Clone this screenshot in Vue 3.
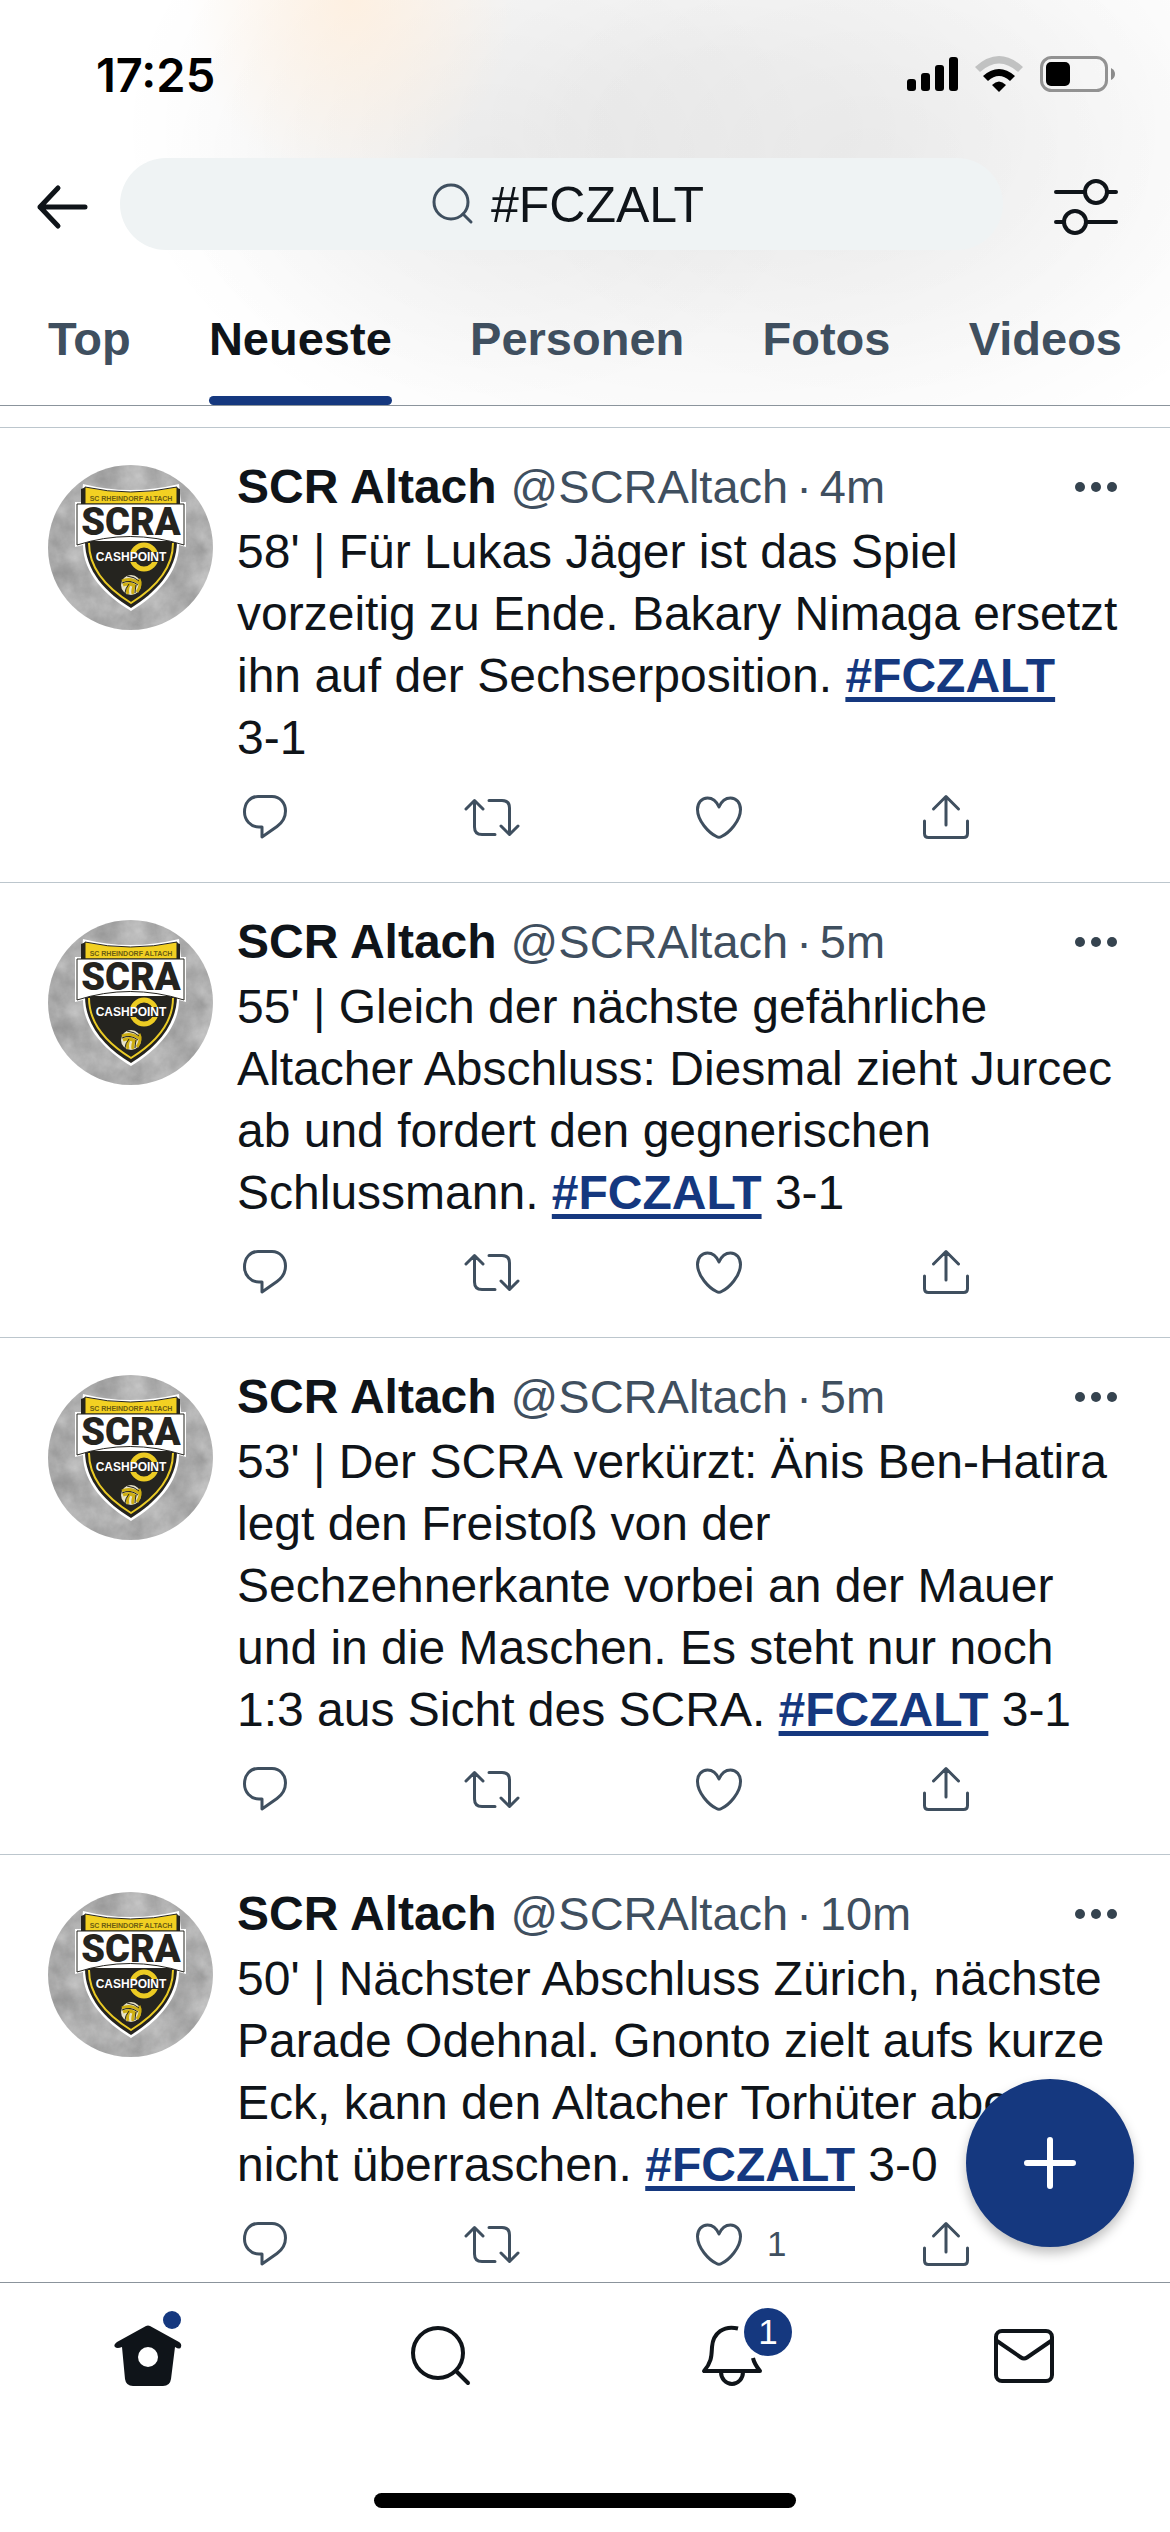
<script setup>
import { ref } from "vue";

const query = ref("#FCZALT");

const tabs = ["Top", "Neueste", "Personen", "Fotos", "Videos"];
const activeTab = ref("Neueste");

const tweets = ref([
  {
    id: 1,
    time: "4m",
    text: "58' | Für Lukas Jäger ist das Spiel vorzeitig zu Ende. Bakary Nimaga ersetzt ihn auf der Sechserposition.",
    score: "3-1",
    likes: 0,
  },
  {
    id: 2,
    time: "5m",
    text: "55' | Gleich der nächste gefährliche Altacher Abschluss: Diesmal zieht Jurcec ab und fordert den gegnerischen Schlussmann.",
    score: "3-1",
    likes: 0,
  },
  {
    id: 3,
    time: "5m",
    text: "53' | Der SCRA verkürzt: Änis Ben-Hatira legt den Freistoß von der Sechzehnerkante vorbei an der Mauer und in die Maschen. Es steht nur noch 1:3 aus Sicht des SCRA.",
    score: "3-1",
    likes: 0,
  },
  {
    id: 4,
    time: "10m",
    text: "50' | Nächster Abschluss Zürich, nächste Parade Odehnal. Gnonto zielt aufs kurze Eck, kann den Altacher Torhüter aber nicht überraschen.",
    score: "3-0",
    likes: 1,
  },
]);

const selectTab = (tab) => {
  activeTab.value = tab;
};

const likeTweet = (tweet) => {
  tweet.likes++;
};
</script>

<template>
  <div class="screen">
    <!-- club badge, shared by all avatars -->
    <svg class="sprite" aria-hidden="true">
      <filter
        id="concrete"
        x="0"
        y="0"
        width="100%"
        height="100%"
        color-interpolation-filters="sRGB"
      >
        <feTurbulence type="fractalNoise" baseFrequency="0.04" numOctaves="5" seed="4" />
        <feColorMatrix
          values="0.25 0 0 0 0.56  0.25 0 0 0 0.56  0.25 0 0 0 0.56  0 0 0 0 1"
        />
      </filter>
      <symbol id="badge" viewBox="0 0 165 165">
        <rect width="165" height="165" filter="url(#concrete)" />
        <path
          d="M35 19Q82 31 131 19L133 37H138V82L131 80C131 108 108 131 83 146C58 131 35 108 35 80L27 82V37H33Z"
          fill="#fff"
        />
        <path d="M33 24L38 22V40H33ZM127 22L132 24V40H127Z" fill="#25241f" />
        <path d="M37 22Q82 32 129 22V39H37Z" fill="#f2d022" stroke="#25241f" />
        <path d="M37 76H129C129 106 107 128 83 143C58 128 37 106 37 76Z" fill="#25241f" />
        <path
          d="M41 78C41 105 62 125 83 138C104 125 125 105 125 78"
          fill="none"
          stroke="#e9ca25"
          stroke-width="2"
        />
        <path d="M29 39H136V80Q82 63 29 80Z" fill="#fff" stroke="#25241f" />
        <text x="83" y="36" class="badge-top">SC RHEINDORF ALTACH</text>
        <text x="83" y="70" class="badge-name">SCRA</text>
        <circle cx="96" cy="92" r="12" fill="none" stroke="#eccb23" stroke-width="5" />
        <path d="M80 92H113" stroke="#25241f" stroke-width="10" />
        <text x="83" y="96" class="badge-sponsor">CASHPOINT</text>
        <circle cx="83" cy="120" r="10" fill="#e8e3c8" />
        <path
          d="M74 116Q82 112 91 118M75 120Q82 117 88 122M83 117Q78 123 80 129M87 119Q84 125 85 129M91 114Q94 120 89 127"
          fill="none"
          stroke="#cdae12"
          stroke-width="3"
        />
        <path
          d="M74 118Q82 114 90 120M81 119Q77 124 77 128M88 120Q87 126 87 128M79 111Q87 112 91 116"
          fill="none"
          stroke="#25241f"
        />
      </symbol>
    </svg>

    <header class="header">
      <div class="status-bar">
        <span class="clock">17:25</span>
        <div class="status-icons">
          <svg width="51" height="36" viewBox="0 0 51 36">
            <rect x="0" y="23" width="9" height="12" rx="3" />
            <rect x="14" y="17" width="9" height="18" rx="3" />
            <rect x="28" y="9" width="9" height="26" rx="3" />
            <rect x="42" y="1" width="9" height="34" rx="3" />
          </svg>
          <svg width="48" height="36" viewBox="0 0 48 36">
            <path d="M0 11Q24 -11 48 11L43 16Q24 -1 5 16Z" fill="#c1c2c2" />
            <path d="M8 20Q24 6 40 20L35 25Q24 15 13 25Z" />
            <path d="M17 29Q24 22 31 29L24 36Z" />
          </svg>
          <svg width="76" height="36" viewBox="0 0 76 36">
            <rect
              x="1.5"
              y="1.5"
              width="65"
              height="33"
              rx="10"
              fill="none"
              stroke="#929292"
              stroke-width="3"
            />
            <rect x="6" y="6" width="24" height="24" rx="5" />
            <path d="M71 12Q75 14 75 18T71 24Z" fill="#8b8b8b" />
          </svg>
        </div>
      </div>

      <div class="search-row">
        <button class="icon-button" aria-label="Zurück">
          <svg width="52" height="48" viewBox="0 0 52 48">
            <path d="M49 24H4M22 5L4 24L22 43" class="line heavy" />
          </svg>
        </button>
        <label class="search-box">
          <svg width="42" height="44" viewBox="0 0 42 44">
            <circle cx="19" cy="20" r="17" class="line thin" />
            <path d="M31 32L39 40" class="line thin" />
          </svg>
          <input v-model="query" class="search-input" type="text" aria-label="Suche" />
        </label>
        <button class="icon-button" aria-label="Filter">
          <svg width="64" height="56" viewBox="0 0 64 56">
            <path d="M2 13H30M54 13H62M2 43H10M34 43H62" class="line" />
            <circle cx="42" cy="13" r="11" class="line" />
            <circle cx="21" cy="43" r="11" class="line" />
          </svg>
        </button>
      </div>

      <nav class="tabs">
        <button
          v-for="tab in tabs"
          :key="tab"
          class="tab"
          :class="{ active: tab === activeTab }"
          @click="selectTab(tab)"
        >
          {{ tab }}
        </button>
      </nav>
    </header>

    <div class="content">
      <main class="feed">
        <article v-for="tweet in tweets" :key="tweet.id" class="tweet">
          <svg class="avatar" role="img" aria-label="SCR Altach"><use href="#badge" /></svg>
          <div class="tweet-body">
            <div class="tweet-head">
              <span class="author">SCR Altach</span>
              <span class="meta">
                <span>@SCRAltach</span>
                <span>·</span>
                <span>{{ tweet.time }}</span>
              </span>
              <button class="more" aria-label="Mehr">
                <svg width="48" height="12" viewBox="0 0 48 12">
                  <circle cx="6" cy="6" r="5" />
                  <circle cx="22" cy="6" r="5" />
                  <circle cx="38" cy="6" r="5" />
                </svg>
              </button>
            </div>
            <p class="tweet-text">
              {{ tweet.text }} <a href="#" class="hashtag">#FCZALT</a> <span class="score">{{ tweet.score }}</span>
            </p>
            <div class="actions">
              <button class="action" aria-label="Antworten">
                <svg width="56" height="56" viewBox="0 0 56 56">
                  <path
                    d="M21 7.5H35C43 7.5 48.5 14 48.5 22C48.5 28.5 45.5 33.5 40 37.5L25 48V38H22C13.5 38 7.5 31 7.5 23C7.5 14 13 7.5 21 7.5Z"
                  />
                </svg>
              </button>
              <button class="action" aria-label="Retweeten">
                <svg width="56" height="56" viewBox="0 0 56 56">
                  <path
                    d="M2 20L10.5 11.5L19 20M10.5 12V38Q10.5 45.5 18 45.5H31M25 11.5H38Q45.5 11.5 45.5 19V45M37 37L45.5 45.5L54 37"
                  />
                </svg>
              </button>
              <button class="action" aria-label="Gefällt mir" @click="likeTweet(tweet)">
                <svg width="56" height="56" viewBox="0 0 56 56">
                  <path
                    d="M28 18C25 11 20 9 16.5 9C10.5 9 6.5 14 6.5 20.5C6.5 32 18 44 25.5 47.5Q28 49 30.5 47.5C38 44 49.5 32 49.5 20.5C49.5 14 45.5 9 39.5 9C36 9 31 11 28 18Z"
                  />
                </svg>
                <span v-if="tweet.likes">{{ tweet.likes }}</span>
              </button>
              <button class="action" aria-label="Teilen">
                <svg width="56" height="56" viewBox="0 0 56 56">
                  <path
                    d="M28 36V8M15.5 20L28 7.5L40.5 20M6.5 32V44.5Q6.5 48.5 10.5 48.5H45.5Q49.5 48.5 49.5 44.5V32"
                  />
                </svg>
              </button>
            </div>
          </div>
        </article>
      </main>

      <button class="compose" aria-label="Neuer Tweet">
        <svg width="52" height="52" viewBox="0 0 52 52">
          <path d="M26 3V49M3 26H49" />
        </svg>
      </button>
    </div>

    <footer class="bottom-bar">
      <nav class="nav">
        <a href="#" class="nav-item" aria-label="Startseite">
          <svg width="72" height="72" viewBox="0 0 72 72">
            <path
              d="M38 6L67 22Q70 24 69 27T63 27L59 59Q58 66 51 66H21Q14 66 13 59L10 27Q5 29 3 27T5 22L34 6Q36 5 38 6Z"
              fill="#0f1419"
            />
            <circle cx="36" cy="37" r="10" fill="#fff" />
            <circle cx="60" cy="0" r="9" class="dot" />
          </svg>
        </a>
        <a href="#" class="nav-item" aria-label="Suchen">
          <svg width="72" height="72" viewBox="0 0 72 72">
            <circle cx="34" cy="33" r="25" class="line" />
            <path d="M52 51L64 63" class="line" />
          </svg>
        </a>
        <a href="#" class="nav-item" aria-label="Mitteilungen">
          <svg width="72" height="72" viewBox="0 0 72 72">
            <path
              d="M42 8.5C28 5 17 13 16 27C15.5 35 16 42 8 51H64C60 46 58 43 57 38"
              class="line butt"
            />
            <path d="M25 52A11 12 0 0 0 47 52" class="line" />
          </svg>
          <span class="count">1</span>
        </a>
        <a href="#" class="nav-item" aria-label="Nachrichten">
          <svg width="72" height="72" viewBox="0 0 72 72">
            <rect x="8" y="11" width="56" height="50" rx="6" class="line" />
            <path d="M9 21L33 37.5Q36 39.5 39 37.5L63 21" class="line" />
          </svg>
        </a>
      </nav>
      <div class="home-indicator"></div>
    </footer>
  </div>
</template>

<style>
body {
  margin: 0;
  background: #fff;
}
</style>

<style scoped>
.screen {
  display: flex;
  flex-direction: column;
  height: 100vh;
  overflow: hidden;
  background: #fff;
  color: #0f1419;
  font-family: "Liberation Sans", Arial, sans-serif;
  font-size: 48px;
}

.sprite {
  position: absolute;
  width: 0;
  height: 0;
}

button {
  padding: 0;
  border: none;
  background: none;
  color: inherit;
  font: inherit;
  cursor: pointer;
}

svg {
  display: block;
  flex: none;
  overflow: visible;
}

.line {
  fill: none;
  stroke: #0f1419;
  stroke-width: 4;
  stroke-linecap: round;
  stroke-linejoin: round;
}

.heavy {
  stroke-width: 5;
}

.thin {
  stroke: #3f4f5f;
  stroke-width: 3;
}

.butt {
  stroke-linecap: butt;
}

/* header */
.header {
  border-bottom: 1px solid #8b949c;
  background:
    radial-gradient(ellipse 14% 46% at 30% 0%, rgba(255, 238, 220, 0.8), transparent),
    radial-gradient(ellipse 28% 60% at 42% 40%, rgba(0, 0, 0, 0.04), transparent),
    radial-gradient(ellipse 30% 60% at 74% 40%, rgba(0, 0, 0, 0.03), transparent),
    radial-gradient(ellipse 52% 92% at 62% 32%, rgba(0, 0, 0, 0.06) 20%, transparent),
    #fff;
}

.status-bar {
  display: flex;
  align-items: center;
  justify-content: space-between;
  height: 148px;
  padding: 0 54px 0 96px;
}

.clock {
  color: #000;
  font-family: Inter, sans-serif;
  font-size: 47px;
  font-weight: 600;
}

.status-icons {
  display: flex;
  gap: 17px;
}

.search-row {
  display: flex;
  align-items: center;
  padding: 10px 52px 0 36px;
}

.icon-button {
  padding-top: 6px;
}

.search-box {
  display: flex;
  flex: 1;
  align-items: center;
  justify-content: center;
  gap: 17px;
  box-sizing: border-box;
  height: 92px;
  margin: 0 51px 0 32px;
  padding-left: 20px;
  border-radius: 46px;
  background: #eff3f4;
}

.search-input {
  width: 220px;
  padding: 2px 0 0;
  border: none;
  outline: none;
  background: none;
  color: #0f1419;
  font: inherit;
  font-size: 50px;
}

.tabs {
  display: flex;
  justify-content: space-between;
  padding: 61px 48px 0;
}

.tab {
  color: #3f4f5f;
  font-size: 47px;
  font-weight: bold;
  line-height: 56px;
}

.tab::after {
  content: "";
  display: block;
  height: 9px;
  margin-top: 29px;
  border-radius: 5px;
}

.tab.active {
  color: #0f1419;
}

.tab.active::after {
  background: #15387f;
}

/* feed */
.content {
  position: relative;
  flex: 1;
  min-height: 0;
}

.feed {
  box-sizing: border-box;
  height: 100%;
  padding-top: 21px;
  overflow-y: auto;
  scrollbar-width: none;
}

.tweet {
  display: flex;
  gap: 24px;
  padding: 31px 48px 37px;
  border-top: 1px solid #bcc6cd;
}

.avatar {
  width: 165px;
  height: 165px;
  margin-top: 6px;
  border-radius: 50%;
  overflow: hidden;
}

.tweet-body {
  flex: 1;
  min-width: 0;
}

.tweet-head {
  display: flex;
  gap: 14px;
  line-height: 56px;
}

.author {
  font-weight: bold;
}

.meta {
  display: flex;
  gap: 8px;
  color: #3f4f5f;
  font-size: 47px;
}

.more {
  display: flex;
  align-items: center;
  margin-left: auto;
  fill: #35434f;
}

.tweet-text {
  margin: 6px 0 20px;
  line-height: 62px;
}

.hashtag {
  color: #15387f;
  font-weight: bold;
  text-decoration: underline;
  text-decoration-thickness: 5px;
  text-decoration-skip-ink: none;
  text-underline-offset: 5px;
}

/* a score must not break at its hyphen */
.score {
  white-space: nowrap;
}

.actions {
  display: flex;
}

.action {
  display: flex;
  flex: none;
  align-items: center;
  gap: 20px;
  width: 227px;
  color: #3f4f5f;
  font-size: 35px;
  line-height: 56px;
}

.action:last-child {
  width: 56px;
}

.action path {
  fill: none;
  stroke: #3f4f5f;
  stroke-width: 3;
  stroke-linecap: round;
  stroke-linejoin: round;
}

.badge-top,
.badge-name,
.badge-sponsor {
  text-anchor: middle;
  font-weight: bold;
}

.badge-top {
  fill: #6b5c12;
  font-size: 7px;
}

.badge-name {
  fill: #25241f;
  font-family: Roboto, sans-serif;
  font-size: 38px;
  font-weight: 900;
}

.badge-sponsor {
  fill: #fff;
  font-size: 12px;
}

.compose {
  position: absolute;
  right: 36px;
  bottom: 35px;
  display: flex;
  align-items: center;
  justify-content: center;
  width: 168px;
  height: 168px;
  border-radius: 50%;
  background: #15387f;
  box-shadow: 0 6px 12px rgba(0, 0, 0, 0.25);
}

.compose path {
  stroke: #fff;
  stroke-width: 6;
  stroke-linecap: round;
}

/* bottom bar */
.bottom-bar {
  padding: 37px 0 24px;
  border-top: 1px solid #8b949c;
  background: #fff;
}

.nav {
  display: grid;
  grid-template-columns: repeat(4, 1fr);
  justify-items: center;
  padding-left: 2px;
}

.nav-item {
  position: relative;
  color: #0f1419;
  text-decoration: none;
}

.dot {
  fill: #15387f;
}

.count {
  position: absolute;
  top: -12px;
  left: 48px;
  width: 48px;
  border-radius: 50%;
  background: #15387f;
  color: #fff;
  font-size: 35px;
  line-height: 48px;
  text-align: center;
}

.home-indicator {
  width: 36%;
  height: 15px;
  margin: 101px auto 0;
  border-radius: 8px;
  background: #000;
}
</style>
